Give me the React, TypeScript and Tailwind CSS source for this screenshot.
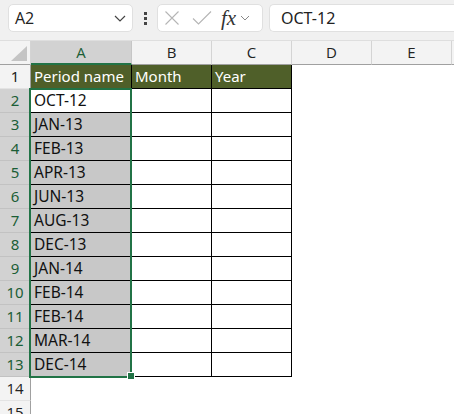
import React from 'react';

const rows: string[] = [
  'OCT-12', 'JAN-13', 'FEB-13', 'APR-13', 'JUN-13', 'AUG-13',
  'DEC-13', 'JAN-14', 'FEB-14', 'FEB-14', 'MAR-14', 'DEC-14',
];

const cellFont = { fontFamily: '"Noto Sans", "Open Sans", sans-serif' };

const Toolbar: React.FC = () => (
  <div className="flex h-[41px] items-start gap-0 border-b border-[#dedede] bg-[#f0f0f0] pt-[4px]">
    {/* Name box */}
    <div className="ml-[8px] flex h-[28px] w-[125px] items-center justify-between rounded-[5px] border border-[#e0e0e0] bg-white pl-[6px] pr-[5px]">
      <span className="text-[16px] text-[#222]">A2</span>
      <svg width="14" height="14" viewBox="0 0 14 14" className="text-[#444]">
        <path d="M2 5 L7 10 L12 5" fill="none" stroke="currentColor" strokeWidth="1.2" />
      </svg>
    </div>
    {/* dots */}
    <div className="ml-[11px] mr-[10px] flex h-[28px] flex-col items-center justify-center gap-[2px]">
      <span className="h-[3px] w-[3px] bg-[#444]" />
      <span className="h-[3px] w-[3px] bg-[#444]" />
      <span className="h-[3px] w-[3px] bg-[#444]" />
    </div>
    {/* cancel / enter / fx */}
    <div className="flex h-[28px] w-[106px] items-center rounded-[5px] border border-[#e0e0e0] bg-white pl-[6px]">
      <svg width="16" height="16" viewBox="0 0 16 16" className="text-[#b5b5b5]">
        <path d="M1.5 1.5 L14.5 14.5 M14.5 1.5 L1.5 14.5" fill="none" stroke="currentColor" strokeWidth="1.1" />
      </svg>
      <svg width="20" height="16" viewBox="0 0 20 16" className="ml-[12px] text-[#b5b5b5]">
        <path d="M1 8.5 L6.5 14 L19 1.5" fill="none" stroke="currentColor" strokeWidth="1.1" />
      </svg>
      <span
        className="ml-[9px] text-[21px] italic leading-none text-[#333]"
        style={{ fontFamily: '"Liberation Serif", "DejaVu Serif", serif' }}
      >
        fx
      </span>
      <svg width="12" height="12" viewBox="0 0 12 12" className="ml-[3px] text-[#888]">
        <path d="M2 4 L6 8 L10 4" fill="none" stroke="currentColor" strokeWidth="1" />
      </svg>
    </div>
    {/* formula bar */}
    <div className="ml-[6px] flex h-[28px] flex-1 items-center rounded-l-[5px] border border-r-0 border-[#e0e0e0] bg-white pl-[11px]">
      <span className="text-[16px] text-[#222]" style={cellFont}>
        OCT-12
      </span>
    </div>
  </div>
);

const ColHeader: React.FC<{ label: string; w: string; active?: boolean }> = ({ label, w, active }) => (
  <div
    className={
      active
        ? `${w} flex items-center justify-center border-r border-b-2 border-r-[#c6c6c6] border-b-[#217346] bg-[#d2d2d2] text-[15px] text-[#1b5e36]`
        : `${w} flex items-center justify-center border-r border-b border-r-[#d4d4d4] border-b-[#a0a0a0] bg-[#f3f3f3] text-[15px] text-[#222]`
    }
  >
    {label}
  </div>
);

const RowHeader: React.FC<{ n: number; active?: boolean }> = ({ n, active }) => (
  <div
    className={
      active
        ? 'flex w-[31px] items-center justify-center border-r border-b border-r-[#a0a0a0] border-b-[#c2c2c2] bg-[#d2d2d2] text-[15px] text-[#1b5e36]'
        : 'flex w-[31px] items-center justify-center border-r border-b border-r-[#a0a0a0] border-b-[#e3e3e3] bg-[#f3f3f3] text-[15px] text-[#222]'
    }
  >
    {n}
  </div>
);

const Sheet: React.FC = () => (
  <div className="relative" style={{ fontFamily: '"Open Sans", "Noto Sans", sans-serif' }}>
    {/* column headers */}
    <div className="flex h-[24px]">
      <div className="flex w-[31px] items-end justify-end border-r border-b border-r-[#d4d4d4] border-b-[#a0a0a0] bg-[#f3f3f3] pr-[3px] pb-[3px]">
        <svg width="16" height="15" viewBox="0 0 16 15">
          <path d="M16 0 L16 15 L0 15 Z" fill="#c4c4c4" />
        </svg>
      </div>
      <ColHeader label="A" w="w-[101px]" active />
      <ColHeader label="B" w="w-[80px]" />
      <ColHeader label="C" w="w-[80px]" />
      <ColHeader label="D" w="w-[80px]" />
      <ColHeader label="E" w="w-[80px]" />
      <div className="flex-1 border-b border-b-[#a0a0a0] bg-[#f3f3f3]" />
    </div>

    {/* row 1 */}
    <div className="flex h-[24px]" style={cellFont}>
      <RowHeader n={1} />
      <div className="flex w-[101px] items-center border-r border-b border-black bg-[#4f5f29] pl-[3px] text-[15px] text-white">
        Period name
      </div>
      <div className="flex w-[80px] items-center border-r border-b border-black bg-[#4f5f29] pl-[3px] text-[15px] text-white">
        Month
      </div>
      <div className="flex w-[80px] items-center border-r border-b border-black bg-[#4f5f29] pl-[3px] text-[15px] text-white">
        Year
      </div>
    </div>

    {rows.map((r, i) => (
      <div key={i} className="flex h-[24px]" style={cellFont}>
        <RowHeader n={i + 2} active />
        <div
          className={
            i === 0
              ? 'flex w-[101px] items-center border-r border-b border-black bg-white pl-[3px] text-[15.5px] text-[#111]'
              : 'flex w-[101px] items-center border-r border-b border-black bg-[#c8c8c8] pl-[3px] text-[15.5px] text-[#111]'
          }
        >
          {r}
        </div>
        <div className="w-[80px] border-r border-b border-black bg-white" />
        <div className="w-[80px] border-r border-b border-black bg-white" />
      </div>
    ))}

    <div className="flex h-[24px]">
      <RowHeader n={14} />
    </div>
    <div className="flex h-[24px]">
      <RowHeader n={15} />
    </div>

    {/* selection outline A2:A13 */}
    <div className="pointer-events-none absolute left-[29px] top-[47px] h-[290px] w-[103px] border-2 border-[#217346]" />
    <div className="pointer-events-none absolute left-[128px] top-[332px] h-[6px] w-[6px] bg-[#217346] outline outline-1 outline-white" />
  </div>
);

const App: React.FC = () => (
  <div className="h-[414px] w-[454px] overflow-hidden bg-white" style={{ fontFamily: '"Open Sans", "Noto Sans", sans-serif' }}>
    <Toolbar />
    <Sheet />
  </div>
);

export default App;
